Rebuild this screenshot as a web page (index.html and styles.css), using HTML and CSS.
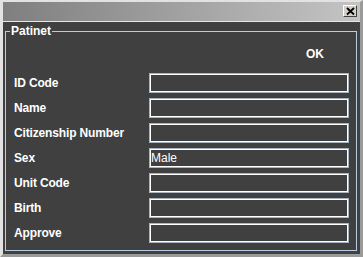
FILE: index.html
```html
<!DOCTYPE html>
<html>
<head>
<meta charset="utf-8">
<link rel="stylesheet" href="styles.css">
</head>
<body>
<div class="window">
  <div class="titlebar">
    <div class="close">
      <svg width="12" height="10" viewBox="0 0 12 10"><path d="M3 2 L10 8.5 M10 2 L3 8.5" stroke="#000" stroke-width="1.8" fill="none"/></svg>
    </div>
  </div>
  <div class="content">
    <fieldset class="group">
      <legend>Patinet</legend>
      <div class="actions"><span class="ok">OK</span></div>
      <div class="form">
        <div class="row"><span class="label">ID Code</span><div class="field"></div></div>
        <div class="row"><span class="label">Name</span><div class="field"></div></div>
        <div class="row"><span class="label">Citizenship Number</span><div class="field"></div></div>
        <div class="row"><span class="label">Sex</span><div class="field">Male</div></div>
        <div class="row"><span class="label">Unit Code</span><div class="field"></div></div>
        <div class="row"><span class="label">Birth</span><div class="field"></div></div>
        <div class="row"><span class="label">Approve</span><div class="field"></div></div>
      </div>
    </fieldset>
  </div>
</div>
</body>
</html>
```
FILE: styles.css
```css
* { box-sizing: border-box; }
body {
  margin: 0;
  background: #404040;
  font-family: "Liberation Sans", Arial, sans-serif;
}
.window {
  width: 363px;
  height: 257px;
  display: flex;
  flex-direction: column;
  border-style: solid;
  border-width: 2px 3px 3px 3px;
  border-color: #e2e2e2 #9a9a9a #9a9a9a #e2e2e2;
  background: #c8c8c8;
}
.titlebar {
  flex: none;
  height: 20px;
  background: linear-gradient(to right, #7f7f7f, #c4c4c4);
  border-bottom: 1px solid #e6e6e6;
  display: flex;
  justify-content: flex-end;
  padding: 3px 3px 0 0;
}
.close {
  width: 14px;
  height: 12px;
  border: 1px solid;
  border-color: #ffffff #404040 #404040 #ffffff;
  background: #d4d0c8;
}
.close svg { display: block; }
.content {
  flex: 1;
  background: #404040;
  display: flex;
  padding: 2px 3px 3px 2px;
}
.group {
  flex: 1;
  min-width: 0;
  margin: 0;
  border: 1px solid #b8cce4;
  padding: 9px 7px 0 8px;
}
.group legend {
  margin-left: -4px;
  padding: 0 1px;
  font-size: 12px;
  font-weight: bold;
  line-height: 14px;
  color: #ffffff;
}
.actions {
  display: flex;
  justify-content: flex-end;
  padding-right: 25px;
  margin-bottom: 12px;
}
.ok {
  font-size: 12px;
  font-weight: bold;
  line-height: 14px;
  color: #ffffff;
}
.form {
  display: flex;
  flex-direction: column;
  gap: 5px;
}
.row {
  display: flex;
  height: 20px;
}
.label {
  width: 135px;
  font-size: 12px;
  font-weight: bold;
  letter-spacing: -0.15px;
  line-height: 21px;
  color: #ffffff;
}
.field {
  width: 200px;
  height: 20px;
  border: 1px solid #a8b4c0;
  box-shadow: inset 0 0 0 1px #ffffff;
  padding-left: 1px;
  font-size: 12px;
  line-height: 18px;
  color: #ffffff;
}
```
